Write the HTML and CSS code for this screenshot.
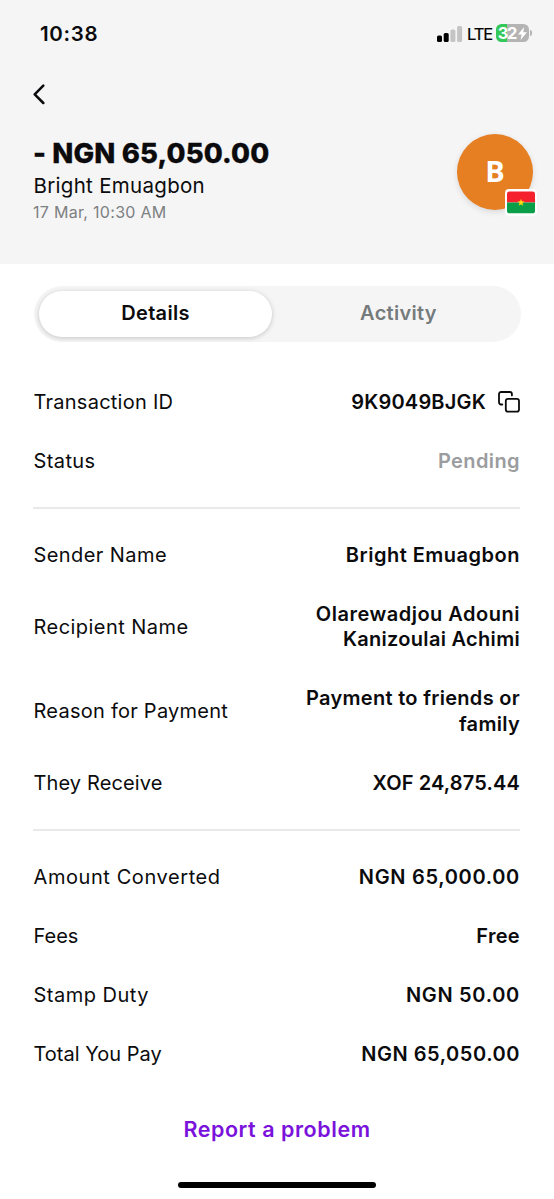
FILE: index.html
```html
<!DOCTYPE html>
<html lang="en">
<head>
<meta charset="utf-8">
<title>Transaction details</title>
<link rel="stylesheet" href="styles.css">
</head>
<body>
<main class="screen">
  <header class="header">
    <div class="statusbar">
      <span class="clock">10:38</span>
      <div class="indicators">
        <svg class="signal" width="26" height="16" viewBox="0 0 26 16">
          <rect x="0" y="9.5" width="5" height="6.5" rx="1.6" fill="#000"/>
          <rect x="6.7" y="7" width="5" height="9" rx="1.6" fill="#000"/>
          <rect x="13.4" y="3.5" width="5" height="12.5" rx="1.6" fill="#c4c4c4"/>
          <rect x="20.1" y="0" width="5" height="16" rx="1.6" fill="#c4c4c4"/>
        </svg>
        <span class="network">LTE</span>
        <div class="battery">
          <span class="charge">32</span>
          <svg class="bolt" width="9" height="13" viewBox="0 0 9 12" preserveAspectRatio="none"><path d="M6.2 0 0 7h3.6L2.5 12 9 4.8H5.2z" fill="#fff"/></svg>
        </div>
        <span class="battery-cap"></span>
      </div>
    </div>
    <svg class="back" width="14" height="22" viewBox="0 0 14 22" fill="none" stroke="#0b0b0d" stroke-width="2.5" stroke-linecap="round" stroke-linejoin="round"><path d="M10.300 2.600 1.700 11.300 10.300 20"/></svg>
    <div class="summary">
      <div class="summary-text">
        <h1 class="amount">- NGN 65,050.00</h1>
        <div class="person">Bright Emuagbon</div>
        <div class="date">17 Mar, 10:30 AM</div>
      </div>
      <div class="avatar"><span class="initial">B</span>
        <svg class="flag" width="32" height="27" viewBox="0 0 32 26" preserveAspectRatio="none">
          <rect width="32" height="26" rx="4" fill="#fff"/>
          <path d="M2 12.9V5a2.5 2.5 0 0 1 2.500-2.500h23A2.500 2.500 0 0 1 30 5v7.900z" fill="#f5222d"/>
          <path d="M2 12.900v8a2.500 2.500 0 0 0 2.500 2.500h23a2.500 2.500 0 0 0 2.500-2.500v-8z" fill="#0b9e49"/>
          <path d="m16 9.500.9 2.400 2.600.1-2 1.600.7 2.500-2.200-1.400-2.200 1.400.7-2.500-2-1.600 2.600-.1z" fill="#ffdc14"/>
        </svg>
      </div>
    </div>
  </header>

  <nav class="tabs">
    <span class="tab active">Details</span>
    <span class="tab">Activity</span>
  </nav>

  <section class="group ids">
    <div class="row"><span class="label l-id">Transaction ID</span>
      <span class="value copyable"><span class="v-id">9K9049BJGK</span>
        <svg class="copy" width="22" height="22" viewBox="0 0 22 22" fill="none" stroke="#0b0b0d" stroke-width="1.800" stroke-linecap="round" stroke-linejoin="round"><rect x="7.800" y="7.800" width="13.200" height="12.900" rx="2.200"/><path d="M4.300 13.500H3a2 2 0 0 1-2-2V3a2 2 0 0 1 2-2h8.900a2 2 0 0 1 2 2v1.400"/></svg>
      </span></div>
    <div class="row"><span class="label l-status">Status</span><span class="value pending">Pending</span></div>
  </section>
  <section class="group parties">
    <div class="row"><span class="label l-sender">Sender Name</span><span class="value v-sender">Bright Emuagbon</span></div>
    <div class="row"><span class="label l-recipient">Recipient Name</span><span class="value v-recipient">Olarewadjou Adouni<br><span class="v-surname">Kanizoulai Achimi</span></span></div>
    <div class="row"><span class="label l-reason">Reason for Payment</span><span class="value v-reason">Payment to friends or<br>family</span></div>
    <div class="row"><span class="label l-receive">They Receive</span><span class="value v-receive">XOF 24,875.44</span></div>
  </section>
  <section class="group costs">
    <div class="row"><span class="label l-converted">Amount Converted</span><span class="value v-converted">NGN 65,000.00</span></div>
    <div class="row"><span class="label">Fees</span><span class="value v-fees">Free</span></div>
    <div class="row"><span class="label l-stamp">Stamp Duty</span><span class="value v-stamp">NGN 50.00</span></div>
    <div class="row"><span class="label">Total You Pay</span><span class="value v-total">NGN 65,050.00</span></div>
  </section>

  <div class="report">Report a problem</div>
  <div class="home-bar"></div>
</main>
</body>
</html>
```
FILE: styles.css
```css
* { box-sizing: border-box; }
body { margin: 0; background: #fff; font-family: Inter, "Liberation Sans", sans-serif; color: #0b0b0d; }
.screen { width: 554px; height: 1199px; display: flex; flex-direction: column; overflow: hidden; }
.header { height: 264px; background: #f5f5f5; padding: 22px 21px 0 33px; flex: none; }
.statusbar { display: flex; justify-content: space-between; height: 24px; padding: 0 1px 0 7px; }
.clock { font-size: 20.500px; line-height: 24px; font-weight: 600; letter-spacing: 0.700px; }
.indicators { display: flex; align-items: center; height: 22px; }
.signal { margin-top: 1px; }
.network { font-size: 16.500px; line-height: 22px; margin: 2px 0 0 4px; letter-spacing: -1.100px; width: 29px; color: #000; -webkit-text-stroke: 0.200px #000; }
.battery { display: flex; align-items: center; justify-content: center; width: 33px; height: 18px; border-radius: 5.500px; background: linear-gradient(to right, #34c759 33%, #b4b4b4 33%); color: #fff; }
.charge { font-size: 16.500px; line-height: 18px; font-weight: 700; letter-spacing: -1.200px; }
.bolt { margin-left: 2px; }
.battery-cap { width: 2px; height: 6px; border-radius: 0 2px 2px 0; background: #b4b4b4; margin-left: 1px; }
.back { display: block; margin-top: 37px; }
.summary { display: flex; justify-content: space-between; margin-top: 28px; }
.amount { margin: 4px 0 0; font-size: 27.500px; line-height: 32px; font-weight: 800; white-space: nowrap; letter-spacing: 0.150px; -webkit-text-stroke: 0.300px #0b0b0d; }
.person { font-size: 20.500px; line-height: 26px; margin-top: 4px; letter-spacing: 0.300px; padding-left: 0.500px; }
.date { font-size: 16px; line-height: 22px; margin-top: 2px; color: #7c8082; letter-spacing: 0.300px; }
.avatar { position: relative; width: 76px; height: 76px; border-radius: 50%; margin-top: 1px; background: #e67e22; color: #fff; display: flex; align-items: center; justify-content: center; font: 700 29px "Open Sans", sans-serif; box-shadow: 0 2px 6px rgba(0,0,0,.12); }
.initial { padding-bottom: 4px; }
.flag { position: absolute; left: 48px; top: 55px; }
.tabs { display: flex; flex: none; margin: 22px 33px 0 34px; height: 56px; padding: 5px; border-radius: 28px; background: #f5f5f5; }
.tab { flex: 1; display: flex; align-items: center; justify-content: center; font-size: 20px; font-weight: 600; color: #757a7c; padding: 0 0 2px 9px; letter-spacing: 0.300px; }
.tab.active { flex: 0 0 233px; background: #fff; color: #0b0b0d; border-radius: 23px; box-shadow: 0 1px 5px rgba(0,0,0,.2); padding-left: 0; }
.group { margin: 0 34px 0 33px; padding: 33.500px 0 34.500px; display: flex; flex-direction: column; gap: 33.800px; border-bottom: 2px solid #e9e9e9; }
.ids { padding-top: 48px; padding-bottom: 33px; }
.parties { padding-bottom: 33px; }
.costs { border-bottom: 0; }
.row { display: flex; justify-content: space-between; align-items: center; font-size: 20px; line-height: 25.300px; }
.label { white-space: nowrap; padding-left: 0.500px; }
.value { text-align: right; font-weight: 600; white-space: nowrap; }
.copyable { display: flex; align-items: center; gap: 12px; }
.copy { margin-top: -1px; }
.pending { color: #9b9c9e; letter-spacing: 0.400px; }
.l-id { letter-spacing: 0.250px; }
.l-status { letter-spacing: 0.400px; }
.l-sender { letter-spacing: 0.420px; }
.l-recipient { letter-spacing: 0.450px; }
.l-reason { letter-spacing: 0.250px; }
.l-receive { letter-spacing: 0.120px; }
.l-converted { letter-spacing: 0.580px; }
.l-stamp { letter-spacing: 0.500px; }
.v-id { letter-spacing: 0.200px; }
.v-sender, .v-recipient { letter-spacing: 0.500px; }
.v-surname, .v-reason, .v-fees { letter-spacing: 0.300px; }
.v-receive { letter-spacing: 0.150px; }
.v-converted { letter-spacing: 0.680px; }
.v-stamp { letter-spacing: 0.700px; }
.v-total { letter-spacing: 0.550px; }
.report { text-align: center; margin-top: 13px; font-size: 21.500px; line-height: 28px; font-weight: 600; color: #7a12dc; letter-spacing: 0.550px; }
.home-bar { width: 198px; height: 6px; margin: auto auto 11px; border-radius: 3px; background: #000; }
```
